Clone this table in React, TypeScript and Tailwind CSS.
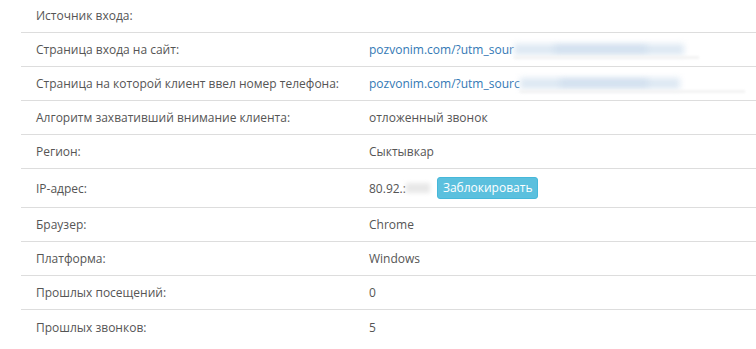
import React from "react";

type Row = { label: string; value: React.ReactNode; tall?: boolean };

function Blur({ w, band }: { w: number; band: number }) {
  // размытая часть адреса (как на скриншоте)
  return (
    <span className="relative inline-block align-middle h-[17px]" style={{ width: w }}>
      <span className="absolute left-0 top-[3px] h-[11px] w-full bg-[#dde8f3] blur-[3px]" />
      <span className="absolute left-[40px] top-[5px] h-[6px] w-[55%] bg-[#cfdeee] blur-[3px]" />
      <span className="absolute left-0 top-[15px] h-[3px] bg-[#f3f3f3] blur-[1px]" style={{ width: band }} />
    </span>
  );
}

const rows: Row[] = [
  { label: "Источник входа:", value: "" },
  {
    label: "Страница входа на сайт:",
    value: (
      <span className="inline-flex items-center">
        <a className="text-[#3379b5]">pozvonim.com/?utm_sour</a>
        <Blur w={170} band={185} />
      </span>
    ),
  },
  {
    label: "Страница на которой клиент ввел номер телефона:",
    value: (
      <span className="inline-flex items-center">
        <a className="text-[#3379b5]">pozvonim.com/?utm_sourc</a>
        <Blur w={160} band={225} />
      </span>
    ),
  },
  { label: "Алгоритм захвативший внимание клиента:", value: "отложенный звонок" },
  { label: "Регион:", value: "Сыктывкар" },
  {
    label: "IP-адрес:",
    tall: true,
    value: (
      <span className="inline-flex items-center">
        <span>80.92.:</span>
        <span className="inline-block w-[24px] h-[10px] bg-[#e8e8e8] blur-[2px]" />
        <button
          type="button"
          className="ml-[7px] bg-[#5bc0de] border border-[#46b8da] text-white text-[12px] leading-[18px] px-[5px] py-px rounded-[3px]"
        >
          Заблокировать
        </button>
      </span>
    ),
  },
  { label: "Браузер:", value: "Chrome" },
  { label: "Платформа:", value: "Windows" },
  { label: "Прошлых посещений:", value: "0" },
  { label: "Прошлых звонков:", value: "5" },
];

export default function App() {
  return (
    <div className="w-[756px] h-[349px] overflow-hidden bg-white font-['Open_Sans',sans-serif] text-[12px] leading-[17px] text-[#555]">
      <div className="ml-[21px] mt-[-1px]">
        {rows.map((r, i) => (
          <div
            key={i}
            className={
              "grid grid-cols-[340px_1fr] items-center " +
              (r.tall ? "h-[39px]" : "h-[34px]") +
              (i < rows.length - 1 ? " border-b border-[#dddddd]" : "")
            }
          >
            <div className="pl-[15px] whitespace-nowrap">{r.label}</div>
            <div className="pl-[8px] whitespace-nowrap">{r.value}</div>
          </div>
        ))}
      </div>
    </div>
  );
}
